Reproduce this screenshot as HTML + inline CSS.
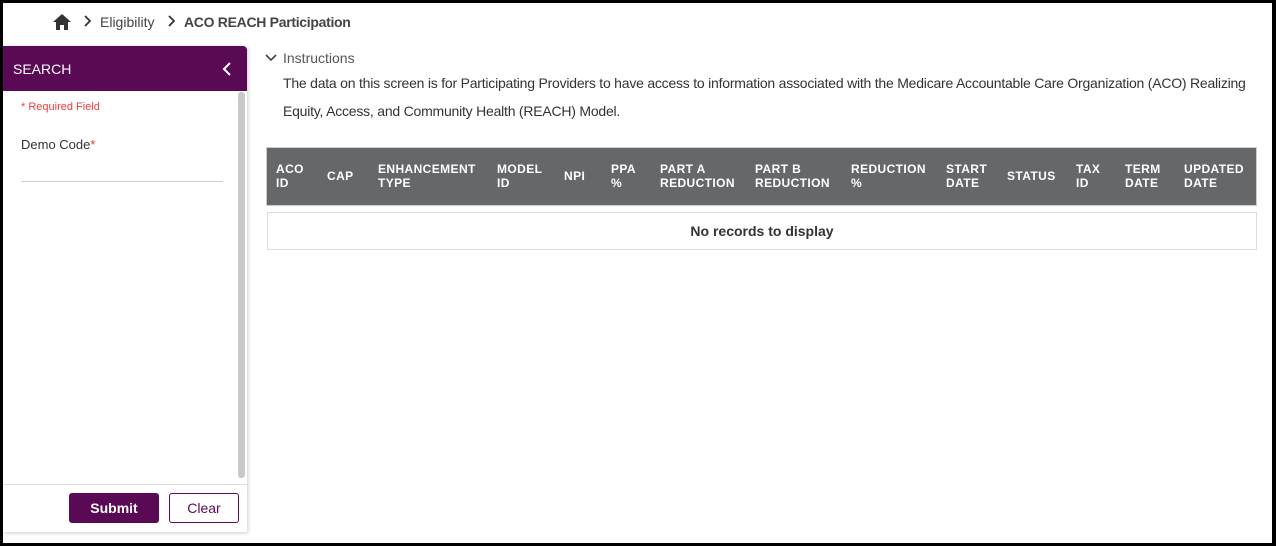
<!DOCTYPE html>
<html><head><style>
*{margin:0;padding:0;box-sizing:border-box}
body{width:1276px;height:546px;background:#fff;font-family:"Liberation Sans",sans-serif;position:relative;overflow:hidden;color:#333}
.frame{position:absolute;inset:0;border:3px solid #000;border-right-width:4px;border-bottom-width:3px;pointer-events:none;z-index:10}
.a{position:absolute;white-space:nowrap}
.th{position:absolute;color:#fff;font-weight:bold;font-size:12px;line-height:14px;letter-spacing:.4px}
</style></head><body>
<div class="frame"></div>
<svg class="a" style="left:52px;top:13px" width="20" height="18" viewBox="0 0 20 18"><path d="M10 1 L1 9 H4 V17 H8 V12 H12 V17 H16 V9 H19 Z" fill="#333"/></svg>
<svg class="a" style="left:83px;top:15px" width="8" height="12"><path d="M2 1 L7 6 L2 11" stroke="#333" stroke-width="1.8" fill="none"/></svg>
<div class="a" style="left:100px;top:14px;font-size:14px;color:#444">Eligibility</div>
<svg class="a" style="left:167px;top:15px" width="8" height="12"><path d="M2 1 L7 6 L2 11" stroke="#333" stroke-width="1.8" fill="none"/></svg>
<div class="a" style="left:184px;top:14px;font-size:14px;font-weight:bold;color:#444;letter-spacing:-.3px">ACO REACH Participation</div>

<div class="a" style="left:3px;top:46px;width:244px;height:486px;background:#fff;box-shadow:1px 1px 4px rgba(0,0,0,.2)"></div>
<div class="a" style="left:3px;top:46px;width:244px;height:45px;background:#5a0a55;border-radius:0 4px 0 0"></div>
<div class="a" style="left:13px;top:61px;color:#fff;font-size:14px">SEARCH</div>
<svg class="a" style="left:221px;top:61px" width="12" height="16"><path d="M9 2 L3 8 L9 14" stroke="#fff" stroke-width="2" fill="none"/></svg>
<div class="a" style="left:238px;top:92px;width:7px;height:386px;background:#c9c9c9;border-radius:3px"></div>
<div class="a" style="left:21px;top:101px;font-size:11px;color:#f03c3c">* Required Field</div>
<div class="a" style="left:21px;top:137px;font-size:13px;color:#333">Demo Code<span style="color:#e33">*</span></div>
<div class="a" style="left:21px;top:181px;width:202px;height:1px;background:#ccc"></div>
<div class="a" style="left:3px;top:484px;width:244px;height:1px;background:#ddd"></div>
<div class="a" style="left:69px;top:493px;width:90px;height:30px;background:#5a0a55;border-radius:3px;color:#fff;font-weight:bold;font-size:14px;text-align:center;line-height:30px">Submit</div>
<div class="a" style="left:169px;top:493px;width:70px;height:30px;border:1px solid #5a0a55;border-radius:3px;color:#5a0a55;font-size:14px;text-align:center;line-height:28px">Clear</div>

<svg class="a" style="left:265px;top:53px" width="12" height="10"><path d="M1 2 L6 7 L11 2" stroke="#444" stroke-width="1.6" fill="none"/></svg>
<div class="a" style="left:283px;top:50px;font-size:14px;color:#555">Instructions</div>
<div class="a" style="left:283px;top:75px;font-size:14px;color:#333;letter-spacing:-.22px">The data on this screen is for Participating Providers to have access to information associated with the Medicare Accountable Care Organization (ACO) Realizing</div>
<div class="a" style="left:283px;top:103px;font-size:14px;color:#333;letter-spacing:-.22px">Equity, Access, and Community Health (REACH) Model.</div>

<div class="a" style="left:266px;top:147px;width:991px;height:59px;background:#666769;border:1px solid #ccc"></div>
<div class="th" style="left:276px;top:162px">ACO<br>ID</div>
<div class="th" style="left:327px;top:169px">CAP</div>
<div class="th" style="left:378px;top:162px">ENHANCEMENT<br>TYPE</div>
<div class="th" style="left:497px;top:162px">MODEL<br>ID</div>
<div class="th" style="left:564px;top:169px">NPI</div>
<div class="th" style="left:611px;top:162px">PPA<br>%</div>
<div class="th" style="left:660px;top:162px">PART A<br>REDUCTION</div>
<div class="th" style="left:755px;top:162px">PART B<br>REDUCTION</div>
<div class="th" style="left:851px;top:162px">REDUCTION<br>%</div>
<div class="th" style="left:946px;top:162px">START<br>DATE</div>
<div class="th" style="left:1007px;top:169px">STATUS</div>
<div class="th" style="left:1076px;top:162px">TAX<br>ID</div>
<div class="th" style="left:1125px;top:162px">TERM<br>DATE</div>
<div class="th" style="left:1184px;top:162px">UPDATED<br>DATE</div>
<div class="a" style="left:267px;top:212px;width:990px;height:38px;border:1px solid #ddd;text-align:center;line-height:36px;font-size:14px;font-weight:bold;color:#333">No records to display</div>
</body></html>
